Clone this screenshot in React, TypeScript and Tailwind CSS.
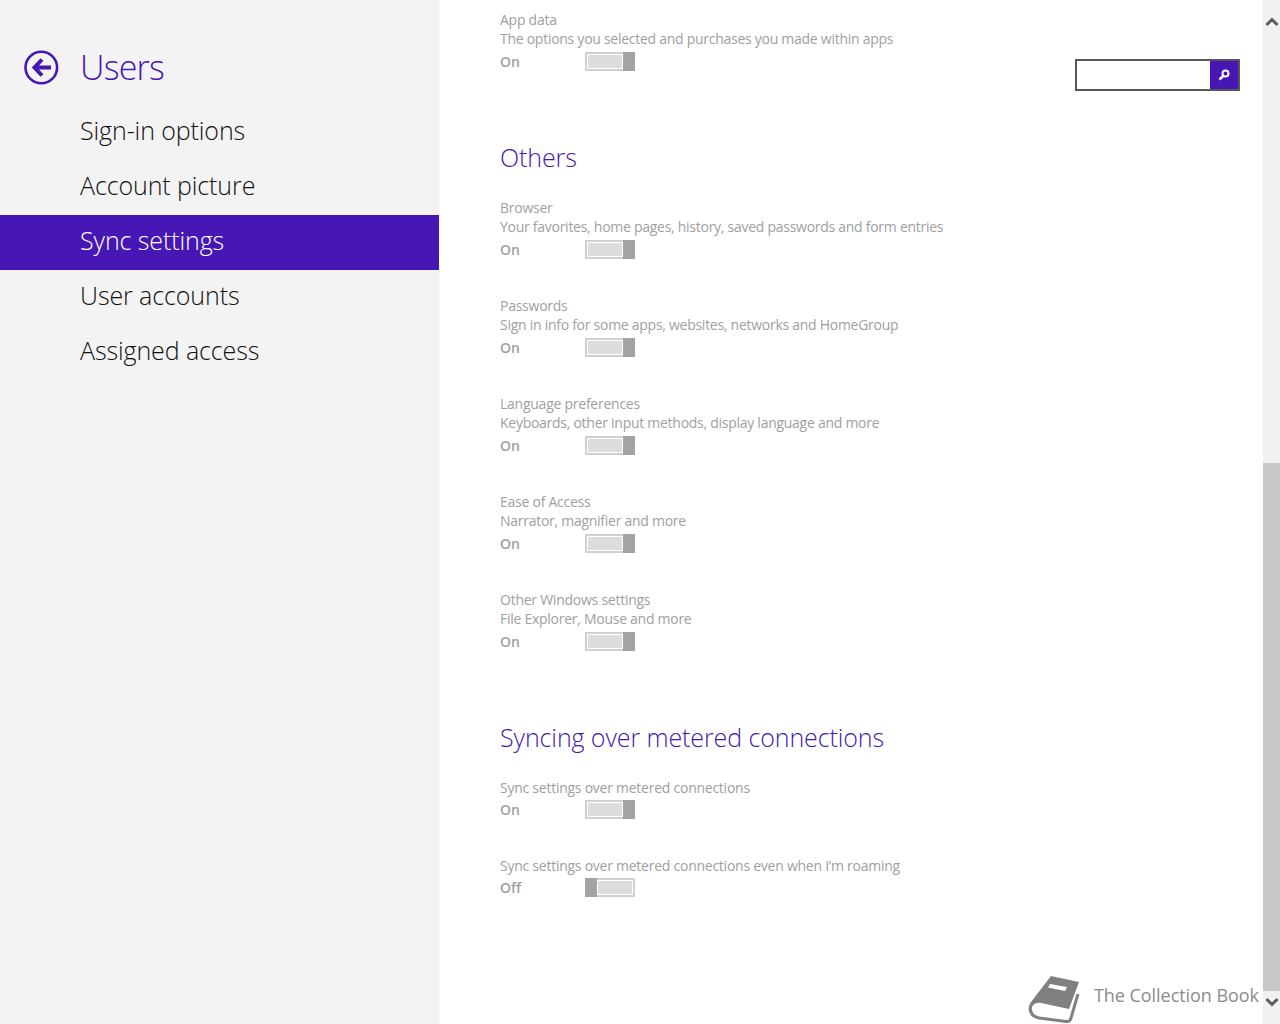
const font = "font-['Open_Sans','Noto_Sans',sans-serif]"

function Toggle({ on }: { on: boolean }) {
  return (
    <div className={`flex h-[19px] w-[50px] border-2 border-[#d0d0d0] bg-white ${on ? "flex-row" : "flex-row-reverse"}`}>
      <div className="m-px flex-1 bg-[#dddddd]" />
      <div className={`-my-[2px] w-[12px] bg-[#a3a3a3] ${on ? "-mr-[2px]" : "-ml-[2px]"}`} />
    </div>
  )
}

function Row({ title, desc, on = true }: { title: string; desc?: string; on?: boolean }) {
  return (
    <div className="mb-[37px] text-[14px] leading-[19px] text-[#a0a0a0]">
      <div className="h-[19px] whitespace-nowrap tracking-[-0.25px]">{title}</div>
      {desc && <div className="h-[20px] whitespace-nowrap tracking-[-0.27px]">{desc}</div>}
      <div className="mt-[3px] flex h-[19px] items-center">
        <span className="w-[85px] font-semibold">{on ? "On" : "Off"}</span>
        <Toggle on={on} />
      </div>
    </div>
  )
}

function Heading({ children }: { children: string }) {
  return (
    <h2 className="mt-[68px] mb-[23px] h-[36px] text-[25px] leading-[36px] font-light tracking-[-0.1px] text-[#4617b4]">
      {children}
    </h2>
  )
}

const navItems = ["Sign-in options", "Account picture", "Sync settings", "User accounts", "Assigned access"]

export default function App() {
  return (
    <div className={`${font} relative flex h-[1024px] w-[1280px] overflow-hidden bg-white`}>
      {/* Left nav */}
      <aside className="h-full w-[440px] shrink-0 border-r border-[#fafafa] bg-[#f3f3f3]">
        <div className="flex h-[105px] items-start pt-[50px] pl-[24px]">
          <svg width="36" height="36" viewBox="0 0 36 36" fill="none" className="shrink-0">
            <circle cx="17.300" cy="17.500" r="15.800" stroke="#4617b4" strokeWidth="2.600" />
            <path d="M18 9.500 10.500 17.500 18 25.500M11 17.500H27" stroke="#4617b4" strokeWidth="4" />
          </svg>
          <h1 className="-mt-[8px] ml-[20px] text-[34px] leading-[50px] font-light tracking-[-0.8px] text-[#4617b4]">Users</h1>
        </div>
        <nav>
          {navItems.map((item) => (
            <div
              key={item}
              className={`flex h-[55px] items-center pb-[4px] pl-[80px] text-[25px] font-light tracking-[-0.1px] ${
                item === "Sync settings" ? "bg-[#4617b4] text-white" : "text-[#111111]"
              }`}
            >
              {item}
            </div>
          ))}
        </nav>
      </aside>

      {/* Settings list, scrolled part way down */}
      <main className="flex-1 pt-[10px] pl-[60px]">
        <Row title="App data" desc="The options you selected and purchases you made within apps" />
        <Heading>Others</Heading>
        <Row title="Browser" desc="Your favorites, home pages, history, saved passwords and form entries" />
        <Row title="Passwords" desc="Sign in info for some apps, websites, networks and HomeGroup" />
        <Row title="Language preferences" desc="Keyboards, other input methods, display language and more" />
        <Row title="Ease of Access" desc="Narrator, magnifier and more" />
        <Row title="Other Windows settings" desc="File Explorer, Mouse and more" />
        <Heading>Syncing over metered connections</Heading>
        <Row title="Sync settings over metered connections" />
        <Row title="Sync settings over metered connections even when I’m roaming" on={false} />
      </main>

      {/* Scrollbar */}
      <div className="flex h-full w-[17px] shrink-0 flex-col bg-[#f0f0f0]">
        <div className="flex h-[463px] items-start justify-center pt-[16px]">
          <svg width="14" height="11" viewBox="0 0 14 11" fill="none">
            <path d="M1.500 9 7 3.500 12.500 9" stroke="#5a5a5a" strokeWidth="3" />
          </svg>
        </div>
        <div className="h-[528px] bg-[#c8c8c8]" />
        <div className="flex flex-1 items-start justify-center pt-[6px]">
          <svg width="14" height="11" viewBox="0 0 14 11" fill="none">
            <path d="M1.500 2 7 7.500 12.500 2" stroke="#5a5a5a" strokeWidth="3" />
          </svg>
        </div>
      </div>

      {/* Search box floats over the page */}
      <div className="absolute top-[59px] left-[1075px] flex h-[32px] w-[165px] border-2 border-[#58585a] bg-white">
        <div className="flex-1" />
        <div className="flex w-[28px] items-center justify-center bg-[#4617b4]">
          <svg width="12" height="12" viewBox="0 0 12 12" fill="none">
            <circle cx="7.500" cy="4.500" r="3" stroke="white" strokeWidth="2" />
            <path d="M5.200 6.800 1.500 10.500" stroke="white" strokeWidth="2.600" />
          </svg>
        </div>
      </div>

      {/* Watermark */}
      <div className="absolute top-[970px] left-[1024px] flex h-[54px] items-center">
        <svg width="64" height="54" viewBox="0 0 64 54" fill="none">
          <path d="M27 6 55 12 45 39 17 33C11 32 7 36 8 40L5 42C4 38 5 35 7 32Z" fill="#808080" />
          <path d="M6.500 40C7 45 10 47 15 48L42 51.500C45 52 46 51 47 48L54 24" stroke="#808080" strokeWidth="3" />
          <path d="M26 14 43 17 41 21 24 17.500Z" fill="white" />
        </svg>
        <span className="mb-[3px] ml-[6px] whitespace-nowrap text-[18px] tracking-[-0.05px] text-[#8c8c8c]">The Collection Book</span>
      </div>
    </div>
  )
}
